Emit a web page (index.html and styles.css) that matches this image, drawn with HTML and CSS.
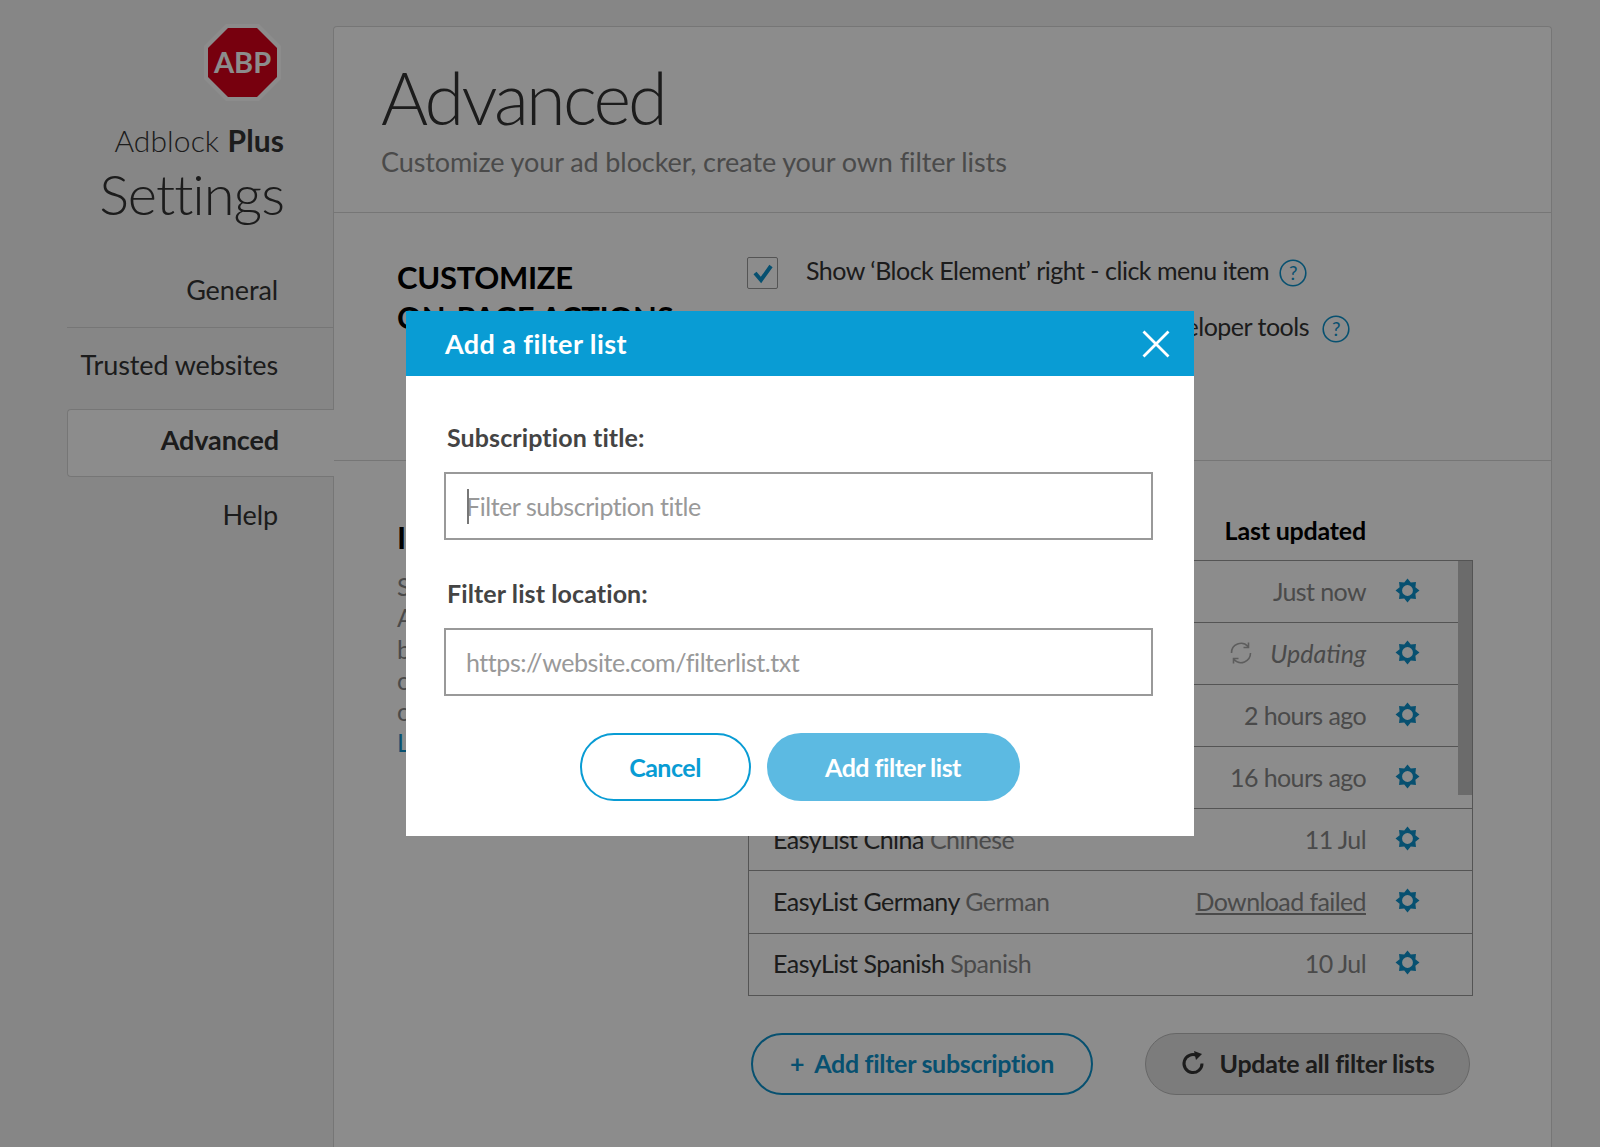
FILE: index.html
```html
<!DOCTYPE html>
<html lang="en">
<head>
    <meta charset="UTF-8">
    <title>Adblock Plus Settings</title>
    <link rel="stylesheet" href="styles.css">
</head>
<body>
    <svg class="sprite" width="0" height="0">
        <symbol id="gear" viewBox="0 0 24 24">
            <path fill="currentColor" fill-rule="evenodd" d="M12 .5L15.14 4.42 20.13 3.870 19.580 8.860 23.500 12 19.580 15.140 20.130 20.130 15.140 19.580 12 23.500 8.860 19.580 3.870 20.130 4.420 15.140 .5 12 4.420 8.860 3.870 3.870 8.860 4.420zM12 6.800a5.200 5.200 0 1 0 0 10.400a5.200 5.200 0 1 0 0-10.400z"/>
        </symbol>
        <symbol id="help" viewBox="0 0 28 28">
            <circle cx="14" cy="14" r="12.800" fill="none" stroke="currentColor" stroke-width="1.600"/>
            <text x="14" y="20.500" text-anchor="middle" class="help-mark" fill="currentColor">?</text>
        </symbol>
    </svg>

    <div class="page">
        <aside class="sidebar">
            <div class="brand">
                <svg class="logo" viewBox="0 0 77 77">
                    <polygon points="22,0 55,0 77,22 77,55 55,77 22,77 0,55 0,22" fill="#ffffff"/>
                    <polygon points="24,4 53,4 73,24 73,53 53,73 24,73 4,53 4,24" fill="#d9001b"/>
                    <text x="38.500" y="49" text-anchor="middle" class="logo-text">ABP</text>
                </svg>
                <div class="brand-name">Adblock <b>Plus</b></div>
                <div class="brand-title">Settings</div>
            </div>
            <nav class="nav">
                <div class="nav-item nav-line">General</div>
                <div class="nav-item">Trusted websites</div>
                <div class="nav-item nav-active">Advanced</div>
                <div class="nav-item">Help</div>
            </nav>
        </aside>

        <main class="panel">
            <header class="panel-head">
                <h1>Advanced</h1>
                <p>Customize your ad blocker, create your own filter lists</p>
            </header>

            <section class="section section-actions">
                <h2>CUSTOMIZE<br>ON-PAGE ACTIONS</h2>
                <div class="options">
                    <div class="option">
                        <span class="check">
                            <svg viewBox="0 0 22 22" width="22" height="22"><path d="M3 11l6 7L19 4" fill="none" stroke="#0d93cc" stroke-width="4"/></svg>
                        </span>
                        <span>Show ‘Block Element’ right - click menu item</span>
                        <svg class="help"><use href="#help"/></svg>
                    </div>
                    <div class="option">
                        <span class="check"></span>
                        <span>Show ‘Adblock Plus’ panel in the developer tools</span>
                        <svg class="help"><use href="#help"/></svg>
                    </div>
                </div>
            </section>

            <section class="section section-lists">
                <div>
                    <h2>INSTALLED FILTERS</h2>
                    <p class="intro">
                        Subscribe to filter lists<br>
                        Adblock Plus uses them<br>
                        blocks or allows ads<br>
                        can be added here<br>
                        or updated at any time<br>
                        <a href="#">Learn more</a>
                    </p>
                </div>
                <div class="lists">
                    <div class="lists-head">
                        <span>Filter list</span>
                        <span class="lists-updated">Last updated</span>
                    </div>
                    <div class="table">
                        <div class="scrollbar"></div>
                        <div class="row">
                            <span class="name">EasyList</span>
                            <span class="when">Just now</span>
                            <svg class="gear"><use href="#gear"/></svg>
                        </div>
                        <div class="row">
                            <span class="name">EasyPrivacy</span>
                            <svg class="spin" viewBox="0 0 24 24"><path d="M2.500 12A9.500 9.500 0 0 1 19 5.500M19.500 1.500v5h-5M21.500 12A9.500 9.500 0 0 1 5 18.500M4.500 22.500v-5h5" fill="none" stroke="currentColor" stroke-width="1.600"/></svg>
                            <span class="when when-busy">Updating</span>
                            <svg class="gear"><use href="#gear"/></svg>
                        </div>
                        <div class="row">
                            <span class="name">Acceptable Ads</span>
                            <span class="when">2 hours ago</span>
                            <svg class="gear"><use href="#gear"/></svg>
                        </div>
                        <div class="row">
                            <span class="name">EasyList Bulgaria</span>
                            <span class="when">16 hours ago</span>
                            <svg class="gear"><use href="#gear"/></svg>
                        </div>
                        <div class="row">
                            <span class="name">EasyList China <i>Chinese</i></span>
                            <span class="when">11 Jul</span>
                            <svg class="gear"><use href="#gear"/></svg>
                        </div>
                        <div class="row">
                            <span class="name">EasyList Germany <i>German</i></span>
                            <span class="when when-failed">Download failed</span>
                            <svg class="gear"><use href="#gear"/></svg>
                        </div>
                        <div class="row">
                            <span class="name">EasyList Spanish <i>Spanish</i></span>
                            <span class="when">10 Jul</span>
                            <svg class="gear"><use href="#gear"/></svg>
                        </div>
                    </div>
                    <div class="actions">
                        <button class="pill pill-add" type="button"><span class="plus">+</span>Add filter subscription</button>
                        <button class="pill pill-update" type="button">
                            <svg viewBox="0 0 24 24" width="24" height="24"><path d="M21 12.500A9 9 0 1 1 16 4.500" fill="none" stroke="currentColor" stroke-width="3"/><path d="M13 0l8 3-6 6z" fill="currentColor"/></svg>
                            Update all filter lists
                        </button>
                    </div>
                </div>
            </section>
        </main>
    </div>

    <div class="overlay">
        <div class="dialog">
            <div class="dialog-head">
                <span>Add a filter list</span>
                <svg viewBox="0 0 28 28" width="28" height="28"><path d="M1.500 1.500l25 25M26.500 1.500l-25 25" stroke="#fff" stroke-width="2.800" fill="none"/></svg>
            </div>
            <div class="dialog-body">
                <label class="field-label">Subscription title:</label>
                <div class="field">
                    <input type="text" placeholder="Filter subscription title">
                    <span class="caret"></span>
                </div>
                <label class="field-label">Filter list location:</label>
                <div class="field">
                    <input type="text" placeholder="https://website.com/filterlist.txt">
                </div>
                <div class="dialog-actions">
                    <button class="btn btn-cancel" type="button">Cancel</button>
                    <button class="btn btn-add" type="button">Add filter list</button>
                </div>
            </div>
        </div>
    </div>
</body>
</html>
```

FILE: styles.css
```css
* {
    box-sizing: border-box;
}

html, body {
    height: 100%;
    margin: 0;
    overflow: hidden;
}

body {
    font-family: Lato, "Open Sans", sans-serif;
    font-size: 25px;
    color: #333;
    background-color: #f4f4f4;
    letter-spacing: -0.4px;
}

.sprite {
    position: absolute;
}

.help-mark {
    font-size: 19px;
}

.page {
    display: flex;
    height: 100%;
    padding-top: 26px;
}

/* sidebar */
.sidebar {
    width: 333px;
    flex-shrink: 0;
    padding-left: 67px;
}

.brand {
    text-align: right;
    padding-right: 49px;
    height: 230px;
}

.logo {
    display: block;
    width: 77px;
    height: 77px;
    margin: -2px 3px 0 auto;
}

.logo-text {
    font-size: 29px;
    font-weight: 700;
    letter-spacing: 0;
    fill: #fff;
}

.brand-name {
    font-size: 30px;
    font-weight: 300;
    line-height: 44px;
    margin-top: 17px;
    letter-spacing: 0.1px;
}

.brand-name b {
    font-weight: 700;
}

.brand-title {
    font-size: 56px;
    font-weight: 300;
    line-height: 64px;
    letter-spacing: -1px;
}

.nav-item {
    height: 74px;
    line-height: 74px;
    text-align: right;
    padding-right: 55px;
    font-size: 27px;
    letter-spacing: -0.1px;
}

.nav-line {
    border-bottom: 1px solid #d8d8d8;
    line-height: 72px;
}

.nav-active {
    height: 68px;
    line-height: 60px;
    margin: 7px -1px 1px 0;
    position: relative;
    font-weight: 700;
    background-color: #fff;
    border: 1px solid #d8d8d8;
    border-right: none;
    border-radius: 4px 0 0 4px;
}

/* main panel */
.panel {
    width: 1219px;
    background-color: #fff;
    border: 1px solid #d8d8d8;
    border-bottom: none;
    border-radius: 4px 4px 0 0;
}

.panel-head {
    height: 186px;
    padding: 28px 47px 0;
    border-bottom: 1px solid #d8d8d8;
}

.panel-head h1 {
    margin: 0;
    font-size: 72px;
    font-weight: 300;
    line-height: 84px;
    letter-spacing: -2.800px;
}

.panel-head p {
    margin: 6px 0 0;
    font-size: 27px;
    letter-spacing: -0.1px;
    color: #888;
}

.section {
    display: flex;
    padding-left: 63px;
}

.section h2 {
    margin: 0;
    font-size: 31px;
    line-height: 40px;
    font-weight: 700;
    color: #000;
    letter-spacing: -0.3px;
}

.section > div:first-child,
.section > h2:first-child {
    width: 351px;
    flex-shrink: 0;
}

.section-actions {
    height: 248px;
    padding-top: 44px;
    border-bottom: 1px solid #d8d8d8;
}

.options {
    margin: -15px 0 0 -1px;
    letter-spacing: -0.5px;
}

.option {
    display: flex;
    align-items: center;
    height: 56px;
}

.check {
    width: 31px;
    height: 32px;
    margin: 5px 28px 0 0;
    display: flex;
    align-items: center;
    justify-content: center;
    border: 1px solid #999;
    border-radius: 2px;
}

.option:last-child .check {
    visibility: hidden;
}

.help {
    width: 28px;
    height: 28px;
    margin: 5px 0 0 10px;
    color: #0d93cc;
}

.option:last-child .help {
    margin-left: 13px;
}

.section-lists {
    padding-top: 56px;
}

.intro {
    margin: 14px 0 0;
    line-height: 31.300px;
    color: #888;
}

.intro a {
    color: #0d93cc;
    text-decoration: none;
}

/* filter list table */
.lists {
    width: 725px;
    margin-top: -2px;
}

.lists-head {
    display: flex;
    justify-content: space-between;
    height: 45px;
    padding-right: 107px;
    font-weight: 700;
    color: #000;
    letter-spacing: -0.2px;
}

.table {
    position: relative;
    border: 1px solid #999;
}

.scrollbar {
    position: absolute;
    top: 0;
    right: 0;
    width: 14px;
    height: 234px;
    background-color: #c4c4c4;
}

.row {
    display: flex;
    align-items: center;
    height: 62.100px;
    padding: 0 52.500px 2px 24px;
    border-bottom: 1px solid #999;
}

.row:last-child {
    height: 61px;
    border-bottom: none;
}

.name {
    margin-right: auto;
    letter-spacing: -0.5px;
}

.name i {
    font-style: normal;
    color: #888;
}

.when {
    color: #888;
    letter-spacing: -0.6px;
}

.when-busy {
    font-style: italic;
    letter-spacing: 0;
}

.when-failed {
    text-decoration: underline;
}

.gear {
    width: 25px;
    height: 25px;
    margin: -1px 0 0 28.500px;
    color: #0d93cc;
}

.spin {
    width: 24px;
    height: 24px;
    margin-right: 17px;
    color: #aaa;
}

.actions {
    display: flex;
    justify-content: space-between;
    padding: 37px 3px 0;
}

.pill {
    height: 62px;
    padding-bottom: 3px;
    border-radius: 31px;
    font: inherit;
    letter-spacing: -0.3px;
    font-weight: 700;
    background: none;
}

.pill-add {
    width: 342px;
    color: #0d93cc;
    border: 2px solid #0d93cc;
}

.plus {
    margin-right: 10px;
}

.pill-update {
    width: 325px;
    display: flex;
    align-items: center;
    justify-content: center;
    gap: 15px;
    color: #333;
    background-color: #e2e2e2;
    border: 1px solid #bbb;
}

/* dialog */
.overlay {
    position: fixed;
    top: 0;
    left: 0;
    right: 0;
    bottom: 0;
    display: flex;
    align-items: center;
    justify-content: center;
    background-color: rgba(0, 0, 0, 0.45);
}

.dialog {
    width: 788px;
    height: 525px;
    background-color: #fff;
}

.dialog-head {
    display: flex;
    align-items: center;
    justify-content: space-between;
    height: 65px;
    padding: 0 24px 0 39px;
    background-color: #099cd4;
    color: #fff;
    font-size: 27px;
    font-weight: 700;
    letter-spacing: 0.4px;
}

.dialog-body {
    padding: 46px 41px 0 38px;
}

.field-label {
    display: block;
    height: 50px;
    padding-left: 3px;
    line-height: 30px;
    font-weight: 700;
    color: #444;
    letter-spacing: 0.1px;
}

.field {
    position: relative;
    height: 68px;
    margin-bottom: 38px;
}

.field input {
    width: 100%;
    height: 100%;
    padding: 0 20px;
    border: 2px solid #999;
    font: inherit;
    letter-spacing: -0.45px;
    outline: none;
}

.field input::placeholder {
    color: #999;
}

.caret {
    position: absolute;
    left: 23px;
    top: 17px;
    width: 2px;
    height: 35px;
    background-color: #777;
}

.dialog-actions {
    display: flex;
    justify-content: center;
    gap: 16px;
    padding-left: 2px;
    margin-top: -1px;
}

.btn {
    height: 68px;
    border-radius: 34px;
    font: inherit;
    font-weight: 700;
    letter-spacing: -0.5px;
}

.btn-cancel {
    width: 171px;
    color: #099cd4;
    background-color: #fff;
    border: 2px solid #099cd4;
}

.btn-add {
    width: 253px;
    color: #fff;
    background-color: #5cbae2;
    border: none;
}
```
